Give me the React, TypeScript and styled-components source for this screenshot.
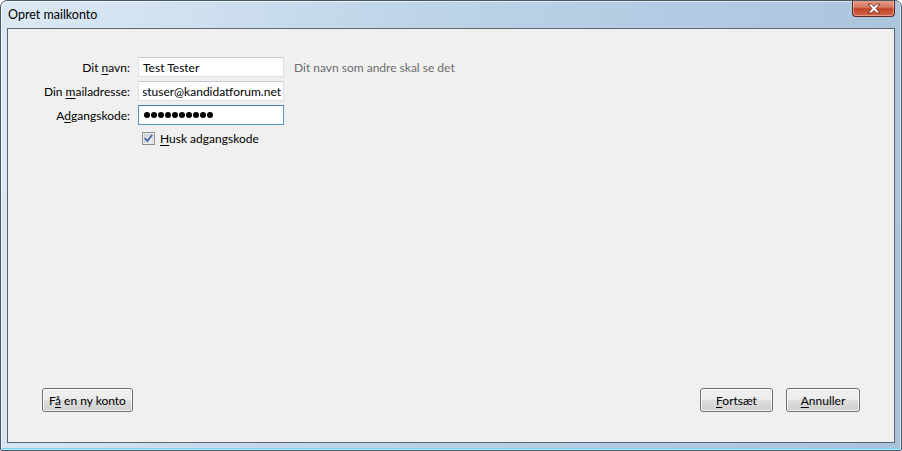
import React from "react";
import styled, { createGlobalStyle } from "styled-components";

const GlobalStyle = createGlobalStyle`
  html, body {
    margin: 0;
    padding: 0;
    background: #ffffff;
  }
  body {
    font-family: Lato, "Open Sans", "Liberation Sans", sans-serif;
    font-size: 12px;
    color: #000;
  }
`;

const Window = styled.div`
  width: 902px;
  height: 451px;
  box-sizing: border-box;
  border: 1px solid #4a5866;
  border-radius: 7px 7px 2px 2px;
  background: linear-gradient(
      100deg,
      #dce9f5 0%,
      #cfe0ef 20%,
      #bcd3e8 45%,
      #b3cbe2 70%,
      #a9c3dc 100%
    );
  box-shadow: inset 0 0 0 1px rgba(255, 255, 255, 0.6),
    inset 0 -2px 0 #6fd0f2;
  display: flex;
  flex-direction: column;
  overflow: hidden;
`;

const TitleBar = styled.div`
  height: 27px;
  flex: 0 0 27px;
  display: flex;
  justify-content: space-between;
  align-items: flex-start;
  padding-left: 7px;
`;

const Title = styled.div`
  line-height: 27px;
  font-size: 12.5px;
  color: #000;
`;

const CloseButton = styled.div`
  width: 41px;
  height: 16px;
  margin-right: 6px;
  margin-top: -1px;
  border: 1px solid #5b2a22;
  border-top: none;
  border-radius: 0 0 4px 4px;
  background: linear-gradient(
    180deg,
    #e8a08e 0%,
    #d7775f 45%,
    #c1442a 55%,
    #d4674a 100%
  );
  box-shadow: inset 0 0 0 1px rgba(255, 255, 255, 0.35);
  display: flex;
  align-items: center;
  justify-content: center;
`;

const Client = styled.div`
  flex: 1;
  margin: 0 6px 7px 6px;
  border: 1px solid #5c6670;
  background: #f0f0f0;
  display: flex;
  flex-direction: column;
  justify-content: space-between;
  padding: 28px 34px 30px 34px;
`;

const Form = styled.div`
  display: grid;
  grid-template-columns: 88px 146px auto;
  column-gap: 8px;
  row-gap: 4px;
  align-items: center;
`;

const Label = styled.div`
  justify-self: end;
  white-space: nowrap;
`;

const TextBox = styled.div<{ $focused?: boolean }>`
  height: 20px;
  min-width: 0;
  box-sizing: border-box;
  background: #fff;
  border: 1px solid ${(p) => (p.$focused ? "#5794bf" : "#dde1e6")};
  border-top-color: ${(p) => (p.$focused ? "#3d7bad" : "#c4c8ce")};
  display: flex;
  align-items: center;
  overflow: hidden;
  padding: 0 2px 0 4px;
  white-space: nowrap;
`;

const Scrolled = styled.div`
  flex: 1;
  min-width: 0;
  overflow: hidden;
  direction: rtl;
  text-align: left;
`;

const ScrolledText = styled.span`
  direction: ltr;
  unicode-bidi: embed;
`;

const Dots = styled.div`
  display: flex;
  gap: 1px;
  padding-left: 1px;
`;

const Dot = styled.span`
  width: 6px;
  height: 6px;
  border-radius: 50%;
  background: #000;
`;

const Hint = styled.div`
  color: #6d6d6d;
  padding-left: 2px;
`;

const CheckRow = styled.label`
  grid-column: 2 / 4;
  display: flex;
  align-items: center;
  gap: 5px;
  padding-left: 4px;
  margin-top: 2px;
`;

const Footer = styled.div`
  display: flex;
  justify-content: space-between;
  align-items: center;
`;

const ButtonGroup = styled.div`
  display: flex;
  gap: 13px;
`;

const Button = styled.button<{ $w: number }>`
  width: ${(p) => p.$w}px;
  height: 24px;
  box-sizing: border-box;
  border: 1px solid #707070;
  border-radius: 3px;
  background: linear-gradient(
    180deg,
    #f2f2f2 0%,
    #ebebeb 48%,
    #dddddd 52%,
    #cfcfcf 100%
  );
  box-shadow: inset 0 0 0 1px rgba(255, 255, 255, 0.75);
  font-family: inherit;
  font-size: 12px;
  color: #000;
  padding: 0;
  cursor: default;
`;

const Key = styled.u`
  text-underline-offset: 2px;
`;

const CloseGlyph = () => (
  <svg width="14" height="11" viewBox="0 0 14 11">
    <path
      d="M1 1 L4.5 1 L7 3.6 L9.5 1 L13 1 L9 5.5 L13 10 L9.5 10 L7 7.4 L4.5 10 L1 10 L5 5.5 Z"
      fill="#ffffff"
      stroke="#6b2a1c"
      strokeWidth="0.9"
      strokeLinejoin="round"
    />
  </svg>
);

const CheckBoxIcon = () => (
  <svg width="13" height="13" viewBox="0 0 13 13">
    <defs>
      <linearGradient id="cbg" x1="0" y1="0" x2="1" y2="1">
        <stop offset="0" stopColor="#cfd3d8" />
        <stop offset="1" stopColor="#f4f5f6" />
      </linearGradient>
    </defs>
    <rect x="0.5" y="0.5" width="12" height="12" fill="#fff" stroke="#8f8f8f" />
    <rect x="2" y="2" width="9" height="9" fill="url(#cbg)" stroke="#b9bdc3" strokeWidth="0.6" />
    <path
      d="M3.3 6.6 L5.4 9 L9.8 3.3"
      fill="none"
      stroke="#3a5fa5"
      strokeWidth="1.7"
      strokeLinecap="round"
      strokeLinejoin="round"
    />
  </svg>
);

export default function App() {
  return (
    <>
      <GlobalStyle />
      <Window>
        <TitleBar>
          <Title>Opret mailkonto</Title>
          <CloseButton>
            <CloseGlyph />
          </CloseButton>
        </TitleBar>
        <Client>
          <Form>
            <Label>
              Dit <Key>n</Key>avn:
            </Label>
            <TextBox>Test Tester</TextBox>
            <Hint>Dit navn som andre skal se det</Hint>

            <Label>
              Din <Key>m</Key>ailadresse:
            </Label>
            <TextBox>
              <Scrolled>
                <ScrolledText>testuser@kandidatforum.net</ScrolledText>
              </Scrolled>
            </TextBox>
            <div />

            <Label>
              A<Key>d</Key>gangskode:
            </Label>
            <TextBox $focused>
              <Dots>
                {Array.from({ length: 10 }).map((_, i) => (
                  <Dot key={i} />
                ))}
              </Dots>
            </TextBox>
            <div />

            <div />
            <CheckRow>
              <CheckBoxIcon />
              <span>
                <Key>H</Key>usk adgangskode
              </span>
            </CheckRow>
          </Form>
          <Footer>
            <Button $w={91}>
              F<Key>å</Key> en ny konto
            </Button>
            <ButtonGroup>
              <Button $w={73}>
                <Key>F</Key>ortsæt
              </Button>
              <Button $w={74}>
                <Key>A</Key>nnuller
              </Button>
            </ButtonGroup>
          </Footer>
        </Client>
      </Window>
    </>
  );
}
